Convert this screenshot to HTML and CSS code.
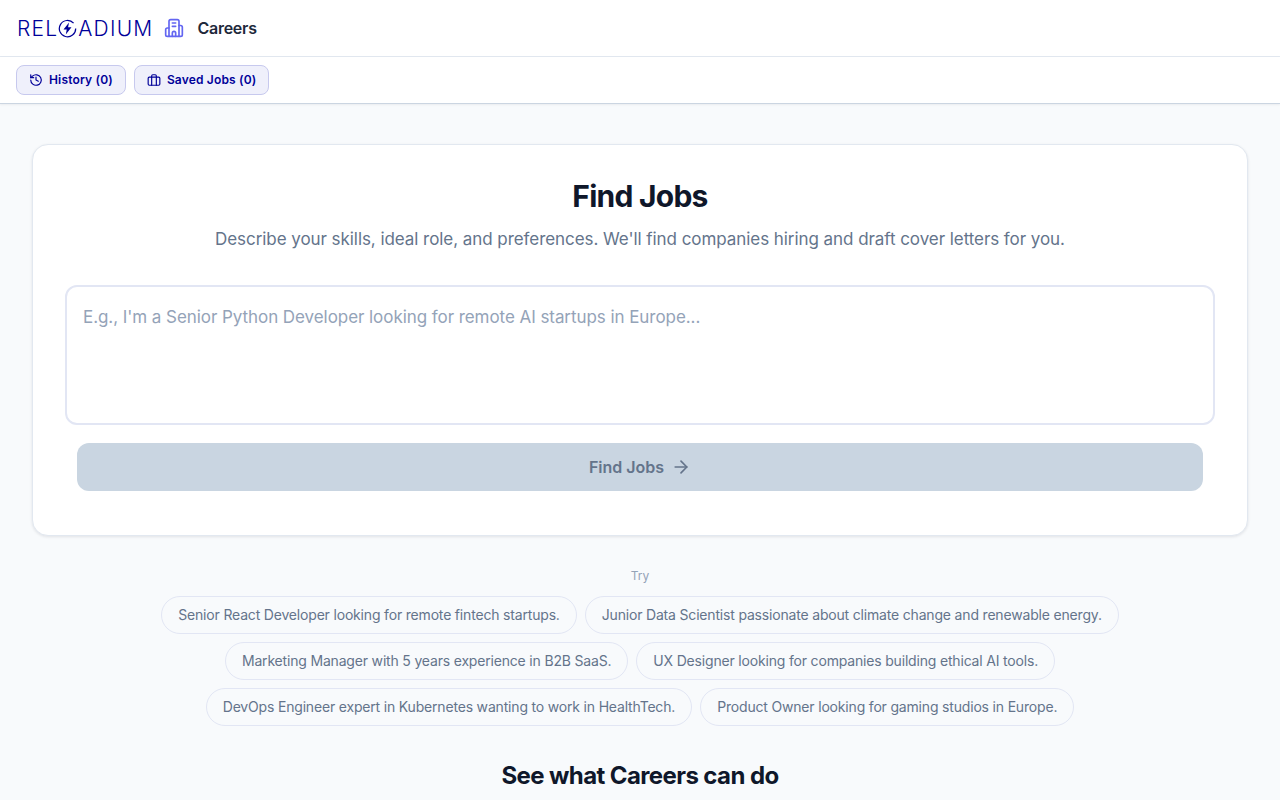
FILE: index.html
```html
<!DOCTYPE html>
<html lang="en">
<head>
    <meta charset="UTF-8">
    <meta name="viewport" content="width=device-width, initial-scale=1.0">
    <title>Careers - Reloadium</title>
    <link rel="stylesheet" href="styles.css">
</head>
<body>
    <header class="topbar">
        <span class="logo">
            <span>REL</span>
            <svg class="logo-o" viewBox="0 0 20 20" width="19" height="19" fill="none" stroke="#000099" stroke-width="1.3">
                <path d="M16.4 4.4A8.6 8.6 0 1 0 18.6 10"/>
                <path d="M11.6 3.8 5.8 11h3.4l-1 5.2 6-7.4h-3.6z" fill="#000099" stroke="none"/>
            </svg>
            <span>ADIUM</span>
        </span>
        <svg class="app-icon" viewBox="0 0 24 24" width="20" height="20" fill="none" stroke="#6366f1" stroke-width="2" stroke-linecap="round" stroke-linejoin="round">
            <path d="M6 22V4a2 2 0 0 1 2-2h8a2 2 0 0 1 2 2v18Z"/>
            <path d="M6 12H4a2 2 0 0 0-2 2v6a2 2 0 0 0 2 2h2"/>
            <path d="M18 9h2a2 2 0 0 1 2 2v9a2 2 0 0 1-2 2h-2"/>
            <path d="M10 6h4"/>
            <path d="M10 10h4"/>
            <path d="M10 22v-4a2 2 0 0 1 4 0v4"/>
        </svg>
        <span class="app-name">Careers</span>
    </header>

    <nav class="tabs">
        <button class="tab">
            <svg viewBox="0 0 24 24" width="14" height="14" fill="none" stroke="currentColor" stroke-width="2" stroke-linecap="round" stroke-linejoin="round">
                <path d="M3 12a9 9 0 1 0 3-6.7L3 8"/>
                <path d="M3 3v5h5"/>
                <path d="M12 7v5l4 2"/>
            </svg>
            History (0)
        </button>
        <button class="tab">
            <svg viewBox="0 0 24 24" width="14" height="14" fill="none" stroke="currentColor" stroke-width="2" stroke-linecap="round" stroke-linejoin="round">
                <rect x="2" y="7" width="20" height="14" rx="2"/>
                <path d="M8 21V5a2 2 0 0 1 2-2h4a2 2 0 0 1 2 2v16"/>
            </svg>
            Saved Jobs (0)
        </button>
    </nav>

    <main class="content">
        <section class="card">
            <h1>Find Jobs</h1>
            <p class="lead">Describe your skills, ideal role, and preferences. We'll find companies hiring and draft cover letters for you.</p>
            <textarea class="prompt" placeholder="E.g., I'm a Senior Python Developer looking for remote AI startups in Europe..."></textarea>
            <button class="submit" disabled>
                Find Jobs
                <svg viewBox="0 0 24 24" width="20" height="20" fill="none" stroke="currentColor" stroke-width="2" stroke-linecap="round" stroke-linejoin="round">
                    <path d="M5 12h14"/>
                    <path d="m12 5 7 7-7 7"/>
                </svg>
            </button>
        </section>

        <p class="try">Try</p>
        <div class="chips">
            <button class="chip">Senior React Developer looking for remote fintech startups.</button>
            <button class="chip">Junior Data Scientist passionate about climate change and renewable energy.</button>
            <button class="chip">Marketing Manager with 5 years experience in B2B SaaS.</button>
            <button class="chip">UX Designer looking for companies building ethical AI tools.</button>
            <button class="chip">DevOps Engineer expert in Kubernetes wanting to work in HealthTech.</button>
            <button class="chip">Product Owner looking for gaming studios in Europe.</button>
        </div>

        <h2>See what Careers can do</h2>
    </main>
</body>
</html>
```

FILE: styles.css
```css
* {
    box-sizing: border-box;
}
html, body {
    height: 800px;
    overflow: hidden;
}
body {
    margin: 0;
    background-color: #f8fafc;
    color: #0f172a;
    font-family: Inter, "Liberation Sans", sans-serif;
}
button {
    font-family: inherit;
}
.topbar {
    height: 57px;
    padding: 0 17px;
    display: flex;
    align-items: center;
    background-color: white;
    border-bottom: 1px solid #e2e8f0;
}
.logo {
    display: flex;
    align-items: center;
    color: #000099;
    font-size: 21px;
    font-weight: 300;
    letter-spacing: 1.2px;
}
.logo-o {
    margin: 0 1px 0 0;
}
.app-icon {
    margin-left: 11px;
}
.app-name {
    margin-left: 13px;
    font-size: 16px;
    font-weight: 600;
    letter-spacing: -0.25px;
    color: #1e293b;
}
.tabs {
    height: 47px;
    padding: 8px 16px;
    display: flex;
    gap: 8px;
    background-color: white;
    border-bottom: 1px solid #cbd5e1;
    box-shadow: 0 1px 2px rgba(15, 23, 42, 0.06);
}
.tab {
    height: 30px;
    padding: 0 12px 2px;
    display: flex;
    align-items: center;
    gap: 6px;
    background-color: #eff0fb;
    border: 1px solid #c7c9ee;
    border-radius: 8px;
    color: #000099;
    font-size: 12px;
    font-weight: 600;
    letter-spacing: 0.17px;
}
.tab svg {
    margin-top: 2px;
}
.content {
    padding: 40px 32px 0;
    text-align: center;
}
.card {
    height: 392px;
    padding: 33px 32px 32px;
    background-color: white;
    border: 1px solid #e2e8f0;
    border-radius: 16px;
    box-shadow: 0 1px 3px rgba(15, 23, 42, 0.1);
}
h1 {
    margin: 0;
    font-size: 30px;
    line-height: 36px;
    font-weight: 700;
    letter-spacing: -0.75px;
}
.lead {
    margin: 11px 0 32px;
    font-size: 17px;
    line-height: 28px;
    letter-spacing: -0.06px;
    color: #64748b;
}
.prompt {
    display: block;
    width: 100%;
    height: 140px;
    padding: 16px;
    background-color: white;
    border: 2px solid #e2e6f4;
    border-radius: 12px;
    font-family: inherit;
    font-size: 17px;
    line-height: 28px;
    letter-spacing: -0.06px;
    resize: none;
    outline: none;
}
.prompt::placeholder {
    color: #94a3b8;
    opacity: 1;
}
.submit {
    width: 1126px;
    height: 48px;
    margin-top: 18px;
    display: inline-flex;
    align-items: center;
    justify-content: center;
    gap: 7px;
    background-color: #c9d5e1;
    border: 0;
    border-radius: 12px;
    color: #64748b;
    font-size: 16px;
    font-weight: 600;
}
.try {
    margin: 32px 0 12px;
    font-size: 12px;
    line-height: 16px;
    color: #94a3b8;
}
.chips {
    width: 1000px;
    margin: 0 auto;
    display: flex;
    flex-wrap: wrap;
    justify-content: center;
    gap: 8px;
}
.chip {
    height: 38px;
    padding: 0 16px 2px;
    background-color: transparent;
    border: 1px solid #e2e6f4;
    border-radius: 19px;
    color: #64748b;
    font-size: 14px;
    letter-spacing: -0.18px;
}
h2 {
    margin: 34px 0 0;
    font-size: 24px;
    line-height: 32px;
    font-weight: 700;
    letter-spacing: -0.6px;
}
```
